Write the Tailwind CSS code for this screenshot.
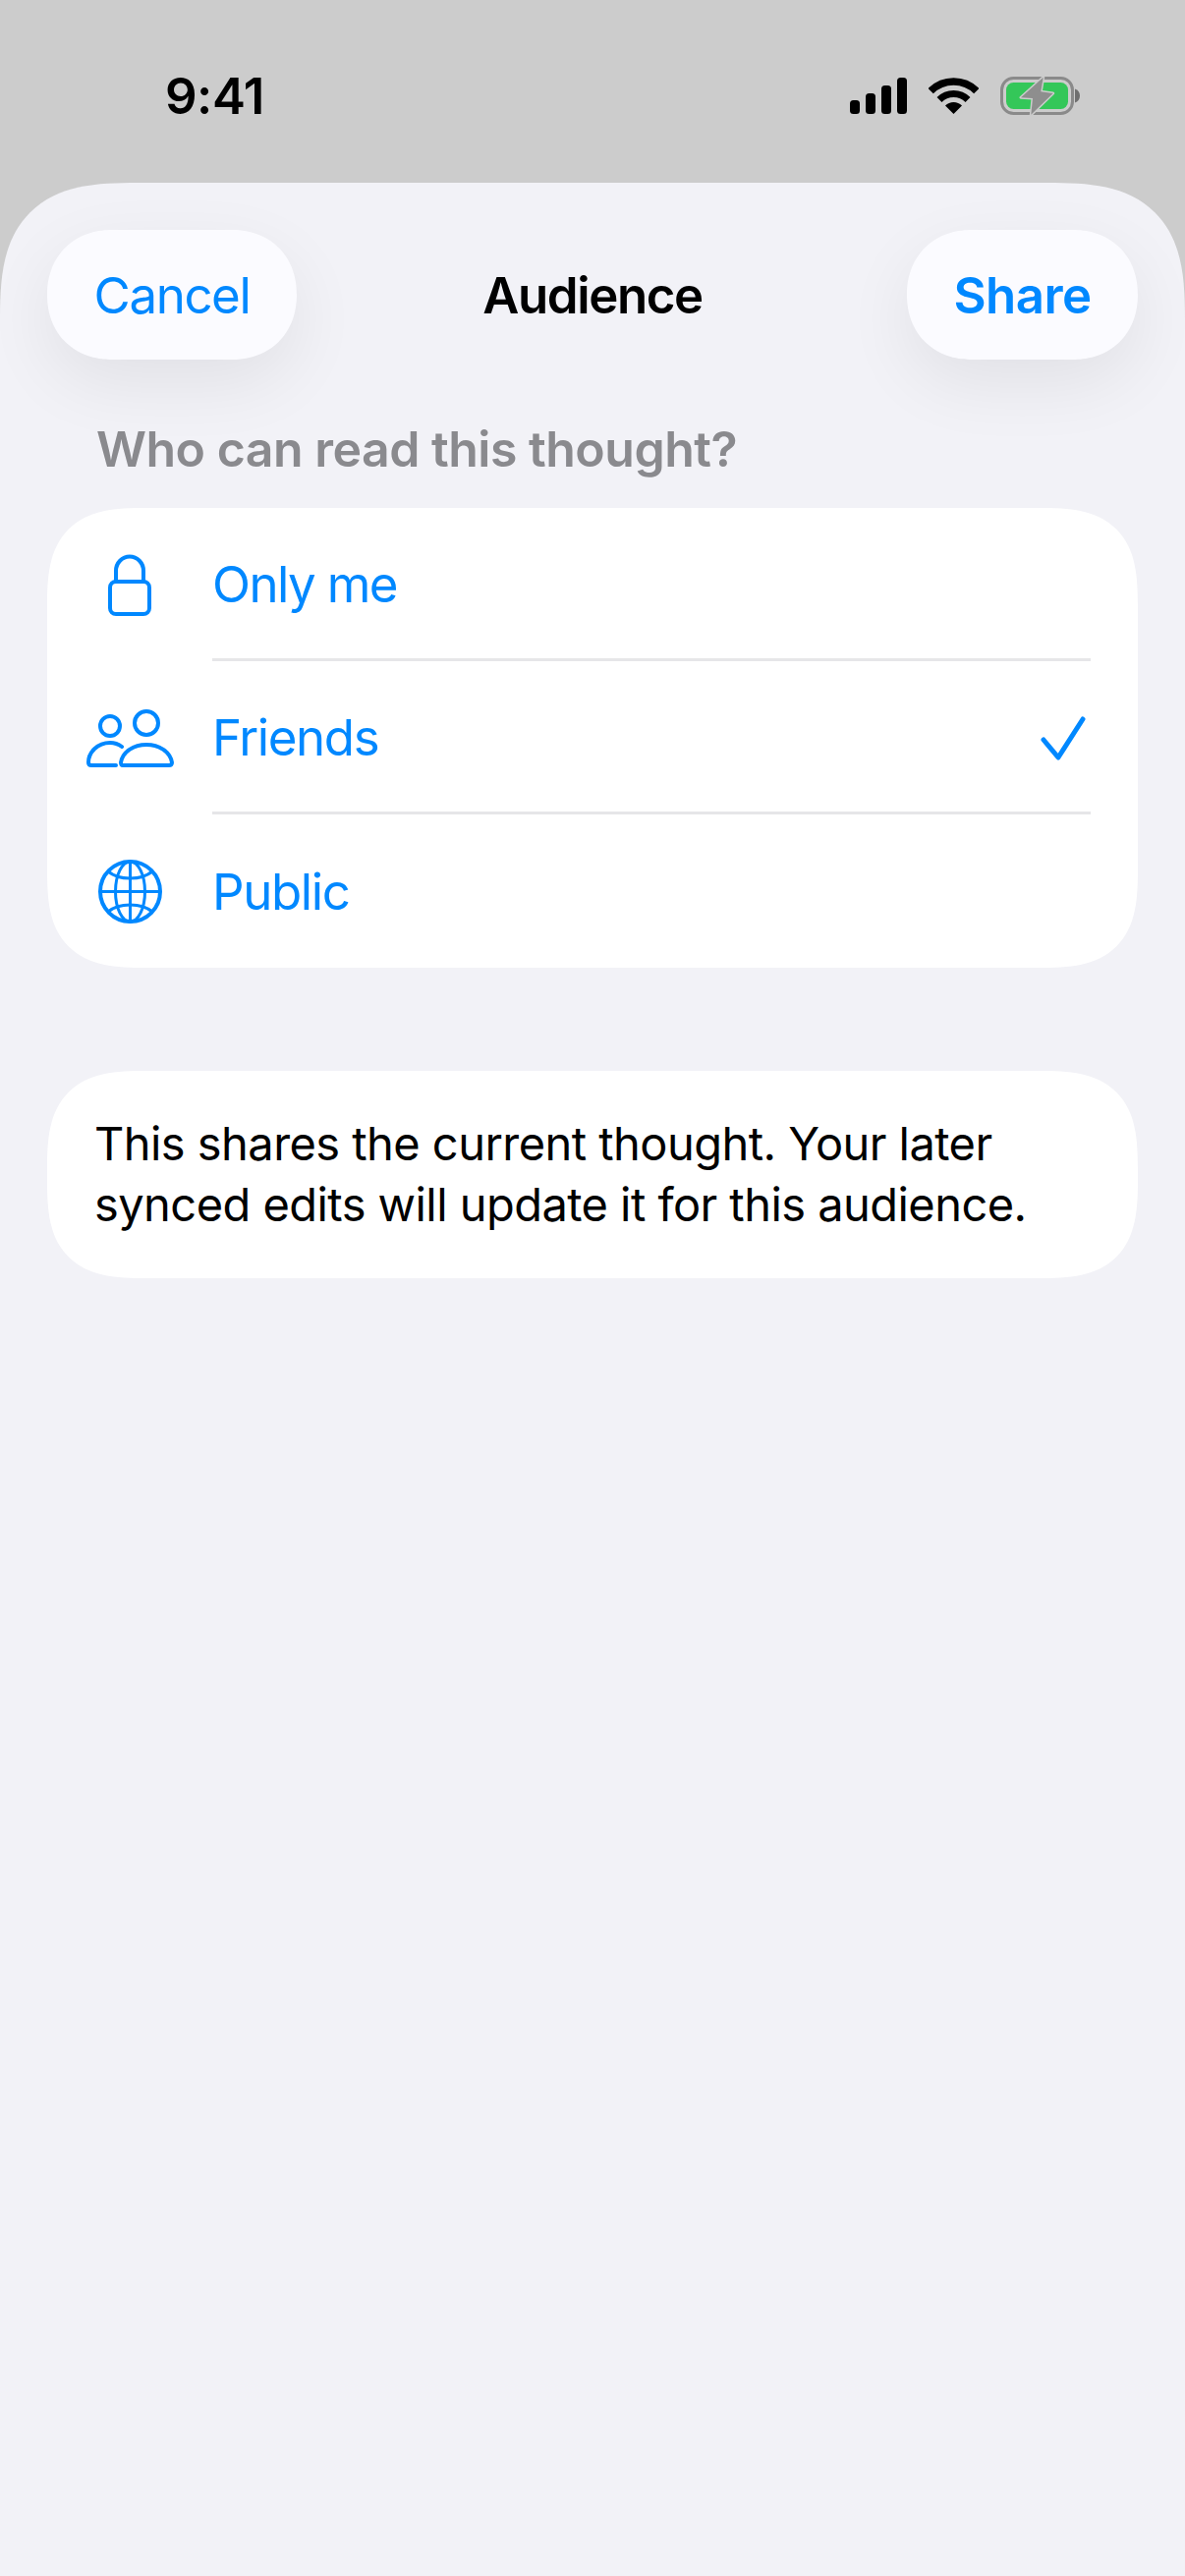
<!DOCTYPE html>
<html lang="en">
<head>
    <meta charset="UTF-8">
    <meta name="viewport" content="width=device-width, initial-scale=1.0">
    <title>Audience</title>
    <script src="https://cdn.jsdelivr.net/npm/@tailwindcss/browser@4"></script>
</head>
<body class="bg-[#cccccc] font-['Inter',sans-serif]">
    <div class="flex flex-col h-[2622px] w-[1206px] overflow-hidden">
        <!-- Status bar -->
        <div class="h-[186px] shrink-0 flex items-start justify-between">
            <span class="ml-[168px] mt-[67px] text-[51px] leading-[62px] font-semibold tracking-[-0.5px] text-black">9:41</span>
            <div class="flex items-center mt-[78px] mr-[106px]">
                <svg width="58" height="37" viewBox="0 0 58 37" class="block">
                    <rect x="0" y="23" width="10" height="14" rx="3.5" fill="#000"/>
                    <rect x="16" y="16" width="10" height="21" rx="3.5" fill="#000"/>
                    <rect x="32" y="8" width="10" height="29" rx="3.5" fill="#000"/>
                    <rect x="48" y="0" width="10" height="37" rx="3.5" fill="#000"/>
                </svg>
                <svg width="51" height="37" viewBox="0 0 51 37" class="block ml-[22px]">
                    <path d="M2.2 13.7A33 33 0 0 1 48.8 13.7" fill="none" stroke="#000" stroke-width="7.5"/>
                    <path d="M11 22.5A20.5 20.5 0 0 1 40 22.5" fill="none" stroke="#000" stroke-width="7"/>
                    <path d="M25.5 37L17 28.5A12 12 0 0 1 34 28.5Z" fill="#000"/>
                </svg>
                <svg width="82" height="39" viewBox="0 0 82 39" class="block ml-[22px]">
                    <rect x="1.5" y="1.5" width="72" height="36" rx="12" fill="none" stroke="#8a8a8a" stroke-width="3"/>
                    <path d="M76 12.5c3 1 5 3.5 5 7s-2 6-5 7Z" fill="#6f6f6f"/>
                    <rect x="6" y="6" width="63" height="27" rx="7.5" fill="#34c759"/>
                    <path d="M43.7 0.8L21 21.3L33 22L31.3 38.8L53.7 17L41.3 15.3Z" fill="#8e8e8e" stroke="#cccccc" stroke-width="3" stroke-linejoin="round" paint-order="stroke"/>
                </svg>
            </div>
        </div>

        <!-- Sheet -->
        <div class="flex-1 bg-[#f2f2f7] rounded-t-[140px] [corner-shape:superellipse(1.5)] overflow-hidden px-[48px]">
            <div class="flex items-center mt-[48px] h-[132px]">
                <div class="flex-1 flex justify-start">
                    <button class="w-[254px] h-[132px] pt-[2px] rounded-[66px] [corner-shape:superellipse(1.1)] bg-[#fbfbff] shadow-[0_24px_70px_rgba(0,0,0,0.07)] text-[51px] tracking-[-1.4px] text-[#0088ff] text-center">Cancel</button>
                </div>
                <h1 class="pt-[2px] text-[51px] font-semibold tracking-[-1.4px] text-black">Audience</h1>
                <div class="flex-1 flex justify-end">
                    <button class="w-[235px] h-[132px] pt-[2px] rounded-[66px] [corner-shape:superellipse(1.1)] bg-[#fbfbff] shadow-[0_24px_70px_rgba(0,0,0,0.07)] text-[51px] font-semibold tracking-[-0.6px] text-[#0088ff] text-center">Share</button>
                </div>
            </div>

            <p class="mt-[61px] mb-[30px] pl-[50px] text-[50px] leading-[60px] font-semibold tracking-[-0.5px] text-[#8a8a8e]">Who can read this thought?</p>

            <!-- Audience options -->
            <div class="bg-white rounded-[100px] [corner-shape:superellipse(1.5)]">
                <div class="flex h-[156px]">
                    <div class="w-[168px] flex items-center justify-center">
                        <svg width="44" height="63" viewBox="0 0 44 63" class="block">
                            <rect x="2" y="28" width="40" height="33" rx="6" fill="none" stroke="#0088ff" stroke-width="4"/>
                            <path d="M8 28V17a14 14.500 0 0 1 28 0V28" fill="none" stroke="#0088ff" stroke-width="4"/>
                        </svg>
                    </div>
                    <div class="flex-1 mr-[48px] pt-[3px] flex items-center border-b-[3px] border-[#e6e6e8]">
                        <span class="text-[51px] tracking-[-1.6px] text-[#0088ff]">Only me</span>
                    </div>
                </div>
                <div class="flex h-[156px]">
                    <div class="w-[168px] flex items-center justify-center">
                        <svg width="89" height="59" viewBox="0 0 89 59" class="block">
                            <circle cx="24" cy="17" r="10" fill="none" stroke="#0088ff" stroke-width="4"/>
                            <circle cx="61" cy="14" r="12" fill="none" stroke="#0088ff" stroke-width="4"/>
                            <path d="M36 38C32 35 27 34 24 34C11 34 2 44 2 54C2 56 3 57 5 57H30" fill="none" stroke="#0088ff" stroke-width="4" stroke-linecap="round"/>
                            <path d="M37 57H84C86 57 87 56 87 54C85 43 74 36 61 36C48 36 37 43 35 54C35 56 35 57 37 57Z" fill="none" stroke="#0088ff" stroke-width="4" stroke-linejoin="round"/>
                        </svg>
                    </div>
                    <div class="flex-1 mr-[48px] pt-[3px] flex items-center justify-between border-b-[3px] border-[#e6e6e8]">
                        <span class="text-[51px] tracking-[-1.4px] text-[#0088ff]">Friends</span>
                        <svg width="46" height="45" viewBox="0 0 46 45" class="block mr-[5px]">
                            <path d="M3 24L18 42L43 3" fill="none" stroke="#0088ff" stroke-width="5" stroke-linecap="round" stroke-linejoin="round"/>
                        </svg>
                    </div>
                </div>
                <div class="flex h-[156px]">
                    <div class="w-[168px] flex items-center justify-center">
                        <svg width="65" height="65" viewBox="0 0 65 65" class="block">
                            <g fill="none" stroke="#0088ff">
                                <circle cx="32.500" cy="32.500" r="30.500" stroke-width="4"/>
                                <ellipse cx="32.500" cy="32.500" rx="15" ry="30.500" stroke-width="3"/>
                                <path d="M32.500 2V63M2 32.500H63" stroke-width="3"/>
                                <path d="M10 12C16 17 24 19 32.500 19C41 19 49 17 55 12M10 53C16 48 24 46 32.500 46C41 46 49 48 55 53" stroke-width="3"/>
                            </g>
                        </svg>
                    </div>
                    <div class="flex-1 mr-[48px] pt-[2px] flex items-center">
                        <span class="text-[51px] tracking-[-1.4px] text-[#0088ff]">Public</span>
                    </div>
                </div>
            </div>

            <!-- Note -->
            <div class="mt-[105px] h-[211px] bg-white rounded-[100px] [corner-shape:superellipse(1.5)] px-[48px] flex items-center">
                <p class="-mt-[1px] text-[47px] leading-[62px] tracking-[-0.55px] text-black">This shares the current thought. Your later<br>synced edits will update it for this audience.</p>
            </div>
        </div>
    </div>
</body>
</html>
